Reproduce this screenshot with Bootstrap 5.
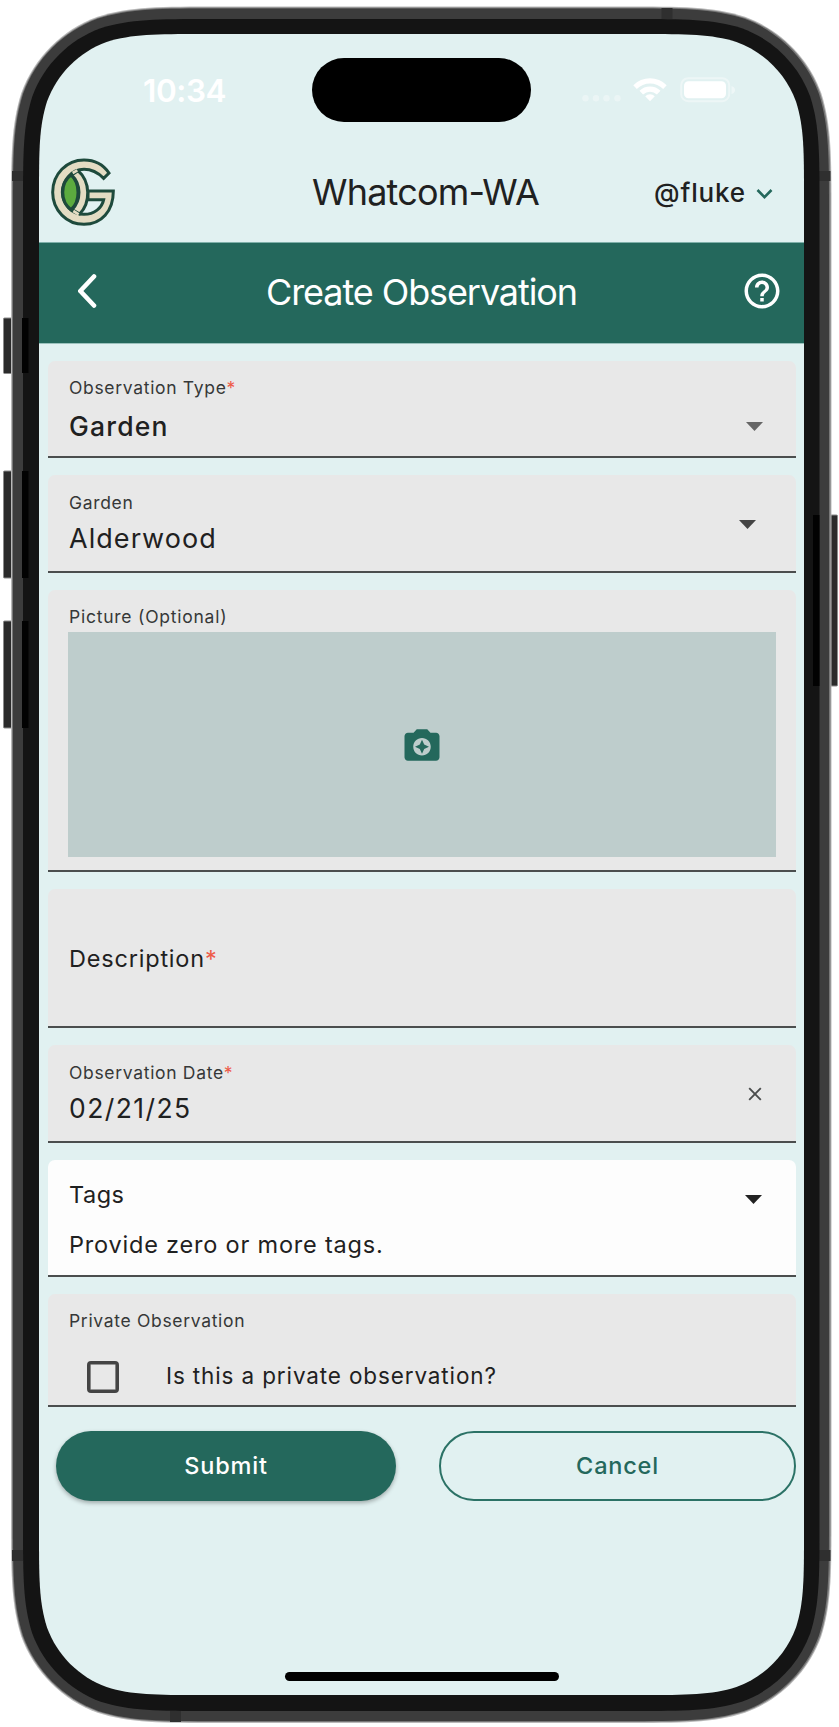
<!DOCTYPE html>
<html lang="en">
<head>
<meta charset="utf-8">
<meta name="viewport" content="width=device-width, initial-scale=1">
<title>Create Observation</title>
<link href="https://cdn.jsdelivr.net/npm/bootstrap@5.3.0/dist/css/bootstrap.min.css" rel="stylesheet">
<style>
  :root { --teal: #24685c; --ink: #1f2121; --mist: #e1f1f1; }
  body { font-family: Inter, "Liberation Sans", sans-serif; color: var(--ink); background: #fff; }
  .phone { width: 839px; height: 1727px; overflow: hidden; }
  .shell { top: 0; left: 0; }
  .screen { width: 765px; height: 1661px; margin: 34px 0 0 39px; }
  .screen svg { display: block; flex: none; }

  .status { height: 118px; display: grid; grid-template-columns: 1fr 219px 1fr; color: #fff; }
  .clock { font-size: 31.5px; font-weight: 600; letter-spacing: -.42px; line-height: 40px; padding: 37px 0 0 104px; }
  .island { height: 64px; margin-top: 24px; background: #000; border-radius: 33px; }
  .signals { padding: 41px 0 0 51px; }

  .appbar { height: 90px; display: grid; grid-template-columns: 1fr auto 1fr; padding: 0 31px 0 12px; }
  .logo { margin-top: 5px; }
  .apptitle { font-size: 36px; line-height: 44px; letter-spacing: -.82px; margin-top: -10px; padding-left: 27px; }
  .user { font-size: 26px; font-weight: 500; letter-spacing: .85px; margin-top: -9px; }
  .user-caret { margin: -4px 0 0 10px; }

  .titlebar { height: 102px; background: var(--teal); color: #fff; border-top: 1px solid #7fb0aa; border-bottom: 1px solid #9bc2bd;
    display: grid; grid-template-columns: 1fr auto 1fr; padding: 0 21px 0 39px; }
  .titlebar h1 { font-size: 36px; font-weight: 400; line-height: 44px; letter-spacing: -1.1px; margin: -3px 18px 0 0; }
  .titlebar svg { margin-top: -4px; }

  .fields { padding: 17px 8px 0 9px; gap: 17px; }
  .field { background: #e8e8e8; border-bottom: 2px solid #4b4e4e; border-radius: 7px 7px 0 0; padding: 17px 20px 0 21px; }
  .tag-field { background: #fdfdfd; }
  .cap { font-size: 17.5px; line-height: 20px; letter-spacing: .68px; color: #363838; white-space: nowrap; }
  .val { font-size: 27px; line-height: 30px; letter-spacing: 1.05px; }
  .val-strong { font-size: 26.5px; font-weight: 500; letter-spacing: 1.2px; }
  .val-date { font-size: 26.5px; letter-spacing: 1.42px; }
  .txt { font-size: 23.5px; line-height: 28px; letter-spacing: .8px; white-space: nowrap; }
  .req { color: #ee5a48; }
  .photo { height: 225px; margin: 5px 0 0 -1px; background: #becdcc; }
  .box { width: 32px; height: 32px; border: 3px solid #444; box-shadow: inset 0 0 0 .6px #444; border-radius: 4px; appearance: none; margin: 0 0 0 18px; }
  .box-label { font-size: 22.5px; letter-spacing: .87px; margin: -2px 0 0 47px; line-height: 28px; }

  .actions { padding: 24px 8px 0 17px; }
  .act { height: 70px; padding: 0; border-radius: 35px; font-size: 23.5px; font-weight: 500; letter-spacing: .8px; }
  .act-main, .act-main:hover { width: 340px; background: var(--teal); color: #fff; border: 0; box-shadow: 0 2px 4px rgba(0,0,0,.3); }
  .act-line, .act-line:hover { width: 357px; color: var(--teal); border: 2px solid #2b7266; background: transparent; }
  .homebar { width: 274px; height: 9px; border-radius: 5px; background: #000; margin: 0 auto 14px; }
</style>
</head>
<body>
<div class="phone position-relative">
  <svg class="shell position-absolute" width="839" height="1727" viewBox="0 0 839 1727" aria-hidden="true">
    <g fill="#2b2b2b" stroke="#8b8b8b" stroke-width="1">
      <rect x="3.5" y="318" width="12" height="55.5" rx="1"/>
      <rect x="3.5" y="471" width="12" height="107" rx="1"/>
      <rect x="3.5" y="621" width="12" height="107" rx="1"/>
      <rect x="826" y="515" width="11.500" height="171" rx="1"/>
    </g>
    <path data-shape="11,6.500,820.500,1716.500,137" fill="#b9b9b9"/>
    <path data-shape="12,7.500,818.500,1714.500,136" fill="#777"/>
    <path data-shape="13,8.500,816,1712.500,135" fill="#3c3c3c"/>
    <g fill="#2f2f2f">
      <rect x="12" y="171" width="11" height="10"/><rect x="819" y="171" width="11.500" height="10"/>
      <rect x="12" y="1550" width="11" height="11"/><rect x="819" y="1550" width="11.500" height="11"/>
      <rect x="661.500" y="8" width="11" height="11"/><rect x="170" y="1711" width="11" height="11"/>
    </g>
    <path data-shape="23,19,796.500,1692,123" fill="#141414"/>
    <g fill="#020202">
      <rect x="22" y="318" width="6.500" height="55"/><rect x="22" y="471" width="6.500" height="107"/>
      <rect x="22" y="621" width="6.500" height="107"/><rect x="813" y="515" width="6.500" height="171"/>
    </g>
    <path data-shape="39,34,765,1661,107" fill="#e1f1f1"/>
  </svg>

  <main class="screen position-absolute d-flex flex-column">
    <div class="status">
      <div class="clock">10:34</div>
      <div class="island"></div>
      <div class="signals">
        <svg width="154" height="30" viewBox="0 0 154 30" fill="#fff">
          <g opacity=".35"><circle cx="3.500" cy="23.300" r="3.200"/><circle cx="14" cy="23.300" r="3.200"/><circle cx="24.500" cy="23.300" r="3.200"/><circle cx="35.500" cy="23.300" r="3.200"/></g>
          <path d="M51.300 10.200A23.500 23.500 0 0 1 84.700 10.200L81.200 14A18.500 18.500 0 0 0 54.800 14Z"/>
          <path d="M57.500 15.800A15 15 0 0 1 78.500 15.800L74.900 19.400A10.200 10.200 0 0 0 61.100 19.400Z"/>
          <path d="M63.200 21.200A7.200 7.200 0 0 1 72.800 21.200L68 26.300Z"/>
          <rect x="99.200" y="3.200" width="48" height="23" rx="7" fill="none" stroke="#fff" stroke-width="2" opacity=".4"/>
          <rect x="102" y="6.300" width="42" height="17" rx="4.500"/>
          <path d="M149.500 11Q153 12 153 15Q153 18 149.500 19Z" opacity=".45"/>
        </svg>
      </div>
    </div>

    <header class="appbar align-items-center">
      <svg class="logo align-self-start" width="64" height="70" viewBox="151 471 192 210" fill="#e3dcc3" stroke="#1e4a3c" stroke-width="9" stroke-linejoin="miter">
        <path d="M325 519C308 494 282 480 250 480C198 480 156 522 156 577C156 631 198 673 250 673C302 673 338 634 338 573H262V599H309C304 624 281 643 250 643C214 643 185 613 185 577C185 540 214 508 250 508C275 508 293 519 309 535Z"/>
        <path d="M211 525C239 550 239 605 211 629C178 605 178 549 211 525Z" fill="#5cab3f"/>
        <path d="M232 512C270 545 270 609 237 642L214 629C242 602 242 552 213 525Z"/>
        <path d="M216 519L230 511M218 633L234 643" stroke="#e3dcc3" stroke-width="8"/>
      </svg>
      <div class="apptitle">Whatcom-WA</div>
      <div class="d-flex align-items-center justify-content-end">
        <span class="user">@fluke</span>
        <svg class="user-caret" width="17" height="13" viewBox="0 0 17 13" fill="none" stroke="#24685c" stroke-width="2.600"><path d="M1.500 1L8.500 8.200L15.500 1"/></svg>
      </div>
    </header>

    <div class="titlebar align-items-center">
      <svg width="20" height="36" viewBox="0 0 20 36" fill="none" stroke="#fff" stroke-width="4.600" stroke-linecap="round" stroke-linejoin="round"><path d="M16 3.500L2.300 18L16 32.500"/></svg>
      <h1>Create Observation</h1>
      <svg class="ms-auto" width="42" height="42" viewBox="0 0 24 24" fill="#fff"><path d="M11 18h2v-2h-2v2zm1-16C6.480 2 2 6.480 2 12s4.480 10 10 10 10-4.480 10-10S17.520 2 12 2zm0 18c-4.410 0-8-3.590-8-8s3.590-8 8-8 8 3.590 8 8-3.590 8-8 8zm0-14c-2.210 0-4 1.790-4 4h2c0-1.100.9-2 2-2s2 .9 2 2c0 2-3 1.750-3 5h2c0-2.250 3-2.500 3-5 0-2.210-1.790-4-4-4z"/></svg>
    </div>

    <form class="fields d-flex flex-column">
      <div class="field" style="height:97px">
        <div class="cap">Observation Type<span class="req">*</span></div>
        <div class="d-flex justify-content-between align-items-center" style="margin-top:13px">
          <div class="val val-strong">Garden</div>
          <svg style="margin:0 13px 0 0" width="17" height="9" viewBox="0 0 17 9" fill="#666"><path d="M0 0H17L8.500 9Z"/></svg>
        </div>
      </div>
      <div class="field d-flex justify-content-between" style="height:98px;padding-top:18px">
        <div>
          <div class="cap">Garden</div>
          <div class="val" style="margin-top:11px">Alderwood</div>
        </div>
        <svg style="margin:27px 20px 0 0" width="17" height="9" viewBox="0 0 17 9" fill="#444"><path d="M0 0H17L8.500 9Z"/></svg>
      </div>
      <div class="field" style="height:282px">
        <div class="cap" style="letter-spacing:.76px">Picture (Optional)</div>
        <div class="photo d-flex justify-content-center">
          <svg style="margin-top:92px" width="42" height="42" viewBox="0 0 24 24" fill="#24685c"><path fill-rule="evenodd" d="M9 3L7.170 5H4c-1.100 0-2 .9-2 2v12c0 1.100.9 2 2 2h16c1.100 0 2-.9 2-2V7c0-1.100-.9-2-2-2h-3.170L15 3H9zm3 15c-2.760 0-5-2.240-5-5s2.240-5 5-5 5 2.240 5 5-2.240 5-5 5z"/><path d="M12 17l1.250-2.750L16 13l-2.750-1.250L12 9l-1.250 2.750L8 13l2.750 1.250z"/></svg>
        </div>
      </div>
      <div class="field" style="height:139px;padding-top:56px">
        <div class="txt">Description<span class="req">*</span></div>
      </div>
      <div class="field d-flex justify-content-between" style="height:98px;padding-top:18px">
        <div>
          <div class="cap">Observation Date<span class="req">*</span></div>
          <div class="val val-date" style="margin-top:10px">02/21/25</div>
        </div>
        <svg style="margin:24px 14px 0 0" width="14" height="14" viewBox="0 0 14 14" stroke="#4a4c4c" stroke-width="1.900"><path d="M1.200 1.200L12.800 12.800M12.800 1.200L1.200 12.800"/></svg>
      </div>
      <div class="field tag-field" style="height:117px;padding-top:21px">
        <div class="d-flex justify-content-between">
          <div class="txt" style="letter-spacing:.5px">Tags</div>
          <svg style="margin:14px 14px 0 0" width="17" height="9" viewBox="0 0 17 9" fill="#222"><path d="M0 0H17L8.500 9Z"/></svg>
        </div>
        <div class="txt" style="margin-top:22px">Provide zero or more tags.</div>
      </div>
      <div class="field" style="height:113px">
        <div class="cap">Private Observation</div>
        <div class="d-flex align-items-center" style="margin-top:30px">
          <input class="box" type="checkbox" id="priv">
          <label class="box-label" for="priv">Is this a private observation?</label>
        </div>
      </div>
    </form>

    <div class="actions d-flex justify-content-between">
      <button class="btn act act-main">Submit</button>
      <button class="btn act act-line">Cancel</button>
    </div>
    <div class="homebar mt-auto"></div>
  </main>
</div>
<script>
  // Continuous-curvature rounded rectangles for the phone shell: x, y, width, height, radius
  document.querySelectorAll('[data-shape]').forEach(function (el) {
    var v = el.dataset.shape.split(',').map(Number), x = v[0], y = v[1], w = v[2], h = v[3], r = v[4];
    var k = [[1.52866, 0], [1.08849, 0], [.86841, 0], [.63149, .07491], [.37282, .16906], [.16906, .37282], [.07491, .63149], [0, .86841], [0, 1.08849], [0, 1.52866]];
    function corner(cx, cy, sx, sy, rev) {
      var p = k.map(function (q) { return (cx + sx * q[0] * r) + ' ' + (cy + sy * q[1] * r); });
      if (rev) p.reverse();
      return p[0] + 'C' + p.slice(1).join(' ');
    }
    el.setAttribute('d', 'M' + corner(x, y, 1, 1, false) + 'L' + corner(x, y + h, 1, -1, true) +
      'L' + corner(x + w, y + h, -1, -1, false) + 'L' + corner(x + w, y, -1, 1, true) + 'Z');
  });
</script>
<script src="https://cdn.jsdelivr.net/npm/bootstrap@5.3.0/dist/js/bootstrap.bundle.min.js"></script>
</body>
</html>
